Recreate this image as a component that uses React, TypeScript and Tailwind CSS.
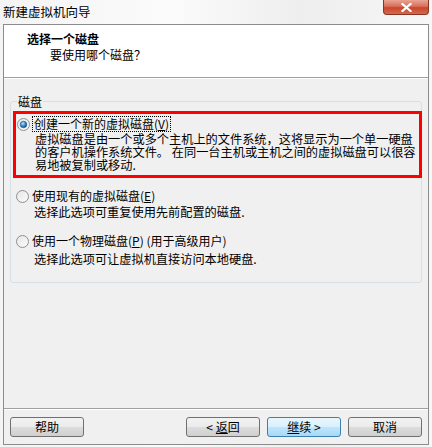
import React from "react";

function Radio({ checked }: { checked?: boolean }) {
  return (
    <svg width="13" height="13" viewBox="0 0 13 13" className="shrink-0">
      <defs>
        <linearGradient id={checked ? "rg1" : "rg0"} x1="0" y1="0" x2="1" y2="1">
          <stop offset="0" stopColor="#e6e6e6" />
          <stop offset="1" stopColor="#fbfbfb" />
        </linearGradient>
        <radialGradient id="dot" cx="0.4" cy="0.35" r="0.7">
          <stop offset="0" stopColor="#bfe3f7" />
          <stop offset="0.5" stopColor="#3a8fcf" />
          <stop offset="1" stopColor="#0d3d6d" />
        </radialGradient>
      </defs>
      <circle cx="6.5" cy="6.5" r="6" fill={`url(#${checked ? "rg1" : "rg0"})`} stroke="#8f8f8f" strokeWidth="1" />
      {checked && <circle cx="6.5" cy="6.5" r="3.3" fill="url(#dot)" stroke="#1b5a8e" strokeWidth="0.6" />}
    </svg>
  );
}

function Btn({ children, primary }: { children: React.ReactNode; primary?: boolean }) {
  return (
    <div
      className={
        primary
          ? "flex h-[20px] w-[74px] items-center justify-center whitespace-nowrap rounded-[3px] border border-[#3c7fb1] bg-[linear-gradient(#eaf6fd_0%,#d9f0fc_50%,#bee6fd_50%,#a7d9f5_100%)] text-[12px] leading-none text-black"
          : "flex h-[20px] w-[74px] items-center justify-center whitespace-nowrap rounded-[3px] border border-[#707070] bg-[linear-gradient(#f2f2f2_0%,#ebebeb_50%,#dddddd_50%,#cfcfcf_100%)] text-[12px] leading-none text-black"
      }
    >
      {children}
    </div>
  );
}

export default function App() {
  return (
    <div className="flex h-[447px] w-[432px] flex-col bg-[linear-gradient(90deg,#f4f4f4,#fbfbfb_40%,#eeeeee_70%,#f7f7f7)] font-['Noto_Sans_CJK_SC','Noto_Sans',sans-serif] text-black">
      {/* title bar */}
      <div className="flex h-[24px] items-start justify-between">
        <div className="pl-[3px] pt-[4px] text-[12.5px] leading-[16px] text-black">新建虚拟机向导</div>
        <div className="mr-[3px] flex h-[15px] w-[46px] items-center justify-center rounded-b-[4px] border border-t-0 border-[#8a3324] bg-[linear-gradient(#e8a493_0%,#d9705a_45%,#c9462c_55%,#d46a4d_100%)]">
          <svg width="11" height="9" viewBox="0 0 11 9">
            <path d="M1.5 1 L9.5 8 M9.5 1 L1.5 8" stroke="#ffffff" strokeWidth="2.2" strokeLinecap="square" />
          </svg>
        </div>
      </div>
      {/* client */}
      <div className="ml-[3px] flex h-[421px] w-[426px] flex-col border border-[#8c8c8c] bg-[#f0f0f0]">
        <div className="flex h-[53px] flex-col border-b border-[#a0a0a0] bg-white pl-[23px] pt-[6px]">
          <div className="text-[12px] font-bold leading-[16px]">选择一个磁盘</div>
          <div className="pl-[23px] pt-[1px] text-[12px] leading-[14px]">要使用哪个磁盘？</div>
        </div>
        <div className="flex flex-1 flex-col border-t border-white">
          <fieldset className="ml-[6px] mt-[16px] h-[188px] w-[412px] rounded-[3px] border border-[#d5dfe5] px-0 pb-0">
            <legend className="ml-[6px] px-[1px] text-[12px] leading-[13px]">磁盘</legend>
            <div className="-mr-[1px] ml-[2px] mt-[3px] flex h-[67px] flex-col border-[3px] border-[#ff0000] pl-[1px] pt-[2px]">
              <div className="flex items-center">
                <Radio checked />
                <span className="ml-[2px] whitespace-nowrap border border-dotted border-black px-[1px] text-[12px] leading-[14px]">
                  创建一个新的虚拟磁盘(<span className="underline">V</span>)
                </span>
              </div>
              <div className="mt-[1px] whitespace-nowrap pl-[18px] text-[12.2px] leading-[13px]">
                <div>虚拟磁盘是由一个或多个主机上的文件系统，这将显示为一个单一硬盘</div>
                <div>的客户机操作系统文件。 在同一台主机或主机之间的虚拟磁盘可以很容</div>
                <div>易地被复制或移动.</div>
              </div>
            </div>
            <div className="ml-[5px] mt-[11px] flex flex-col">
              <div className="flex items-center">
                <Radio />
                <span className="ml-[3px] whitespace-nowrap text-[12px] leading-[14px]">
                  使用现有的虚拟磁盘(<span className="underline">E</span>)
                </span>
              </div>
              <div className="mt-[2px] whitespace-nowrap pl-[18px] text-[12.2px] leading-[14px]">选择此选项可重复使用先前配置的磁盘.</div>
            </div>
            <div className="ml-[5px] mt-[15px] flex flex-col">
              <div className="flex items-center">
                <Radio />
                <span className="ml-[3px] whitespace-nowrap text-[12px] leading-[14px]">
                  使用一个物理磁盘(<span className="underline">P</span>) (用于高级用户)
                </span>
              </div>
              <div className="mt-[4px] whitespace-nowrap pl-[18px] text-[12.2px] leading-[14px]">选择此选项可让虚拟机直接访问本地硬盘.</div>
            </div>
          </fieldset>
          <div className="flex-1" />
          <div className="border-b border-[#a0a0a0]" />
          <div className="border-b border-white" />
          <div className="flex h-[34px] items-start justify-between px-[6px] pt-[7px]">
            <Btn>帮助</Btn>
            <div className="flex gap-[7px]">
              <Btn>
                &lt; <span className="ml-[3px] underline">返</span>回
              </Btn>
              <Btn primary>
                <span className="underline">继</span>续 &gt;
              </Btn>
              <Btn>取消</Btn>
            </div>
          </div>
        </div>
      </div>
    </div>
  );
}
